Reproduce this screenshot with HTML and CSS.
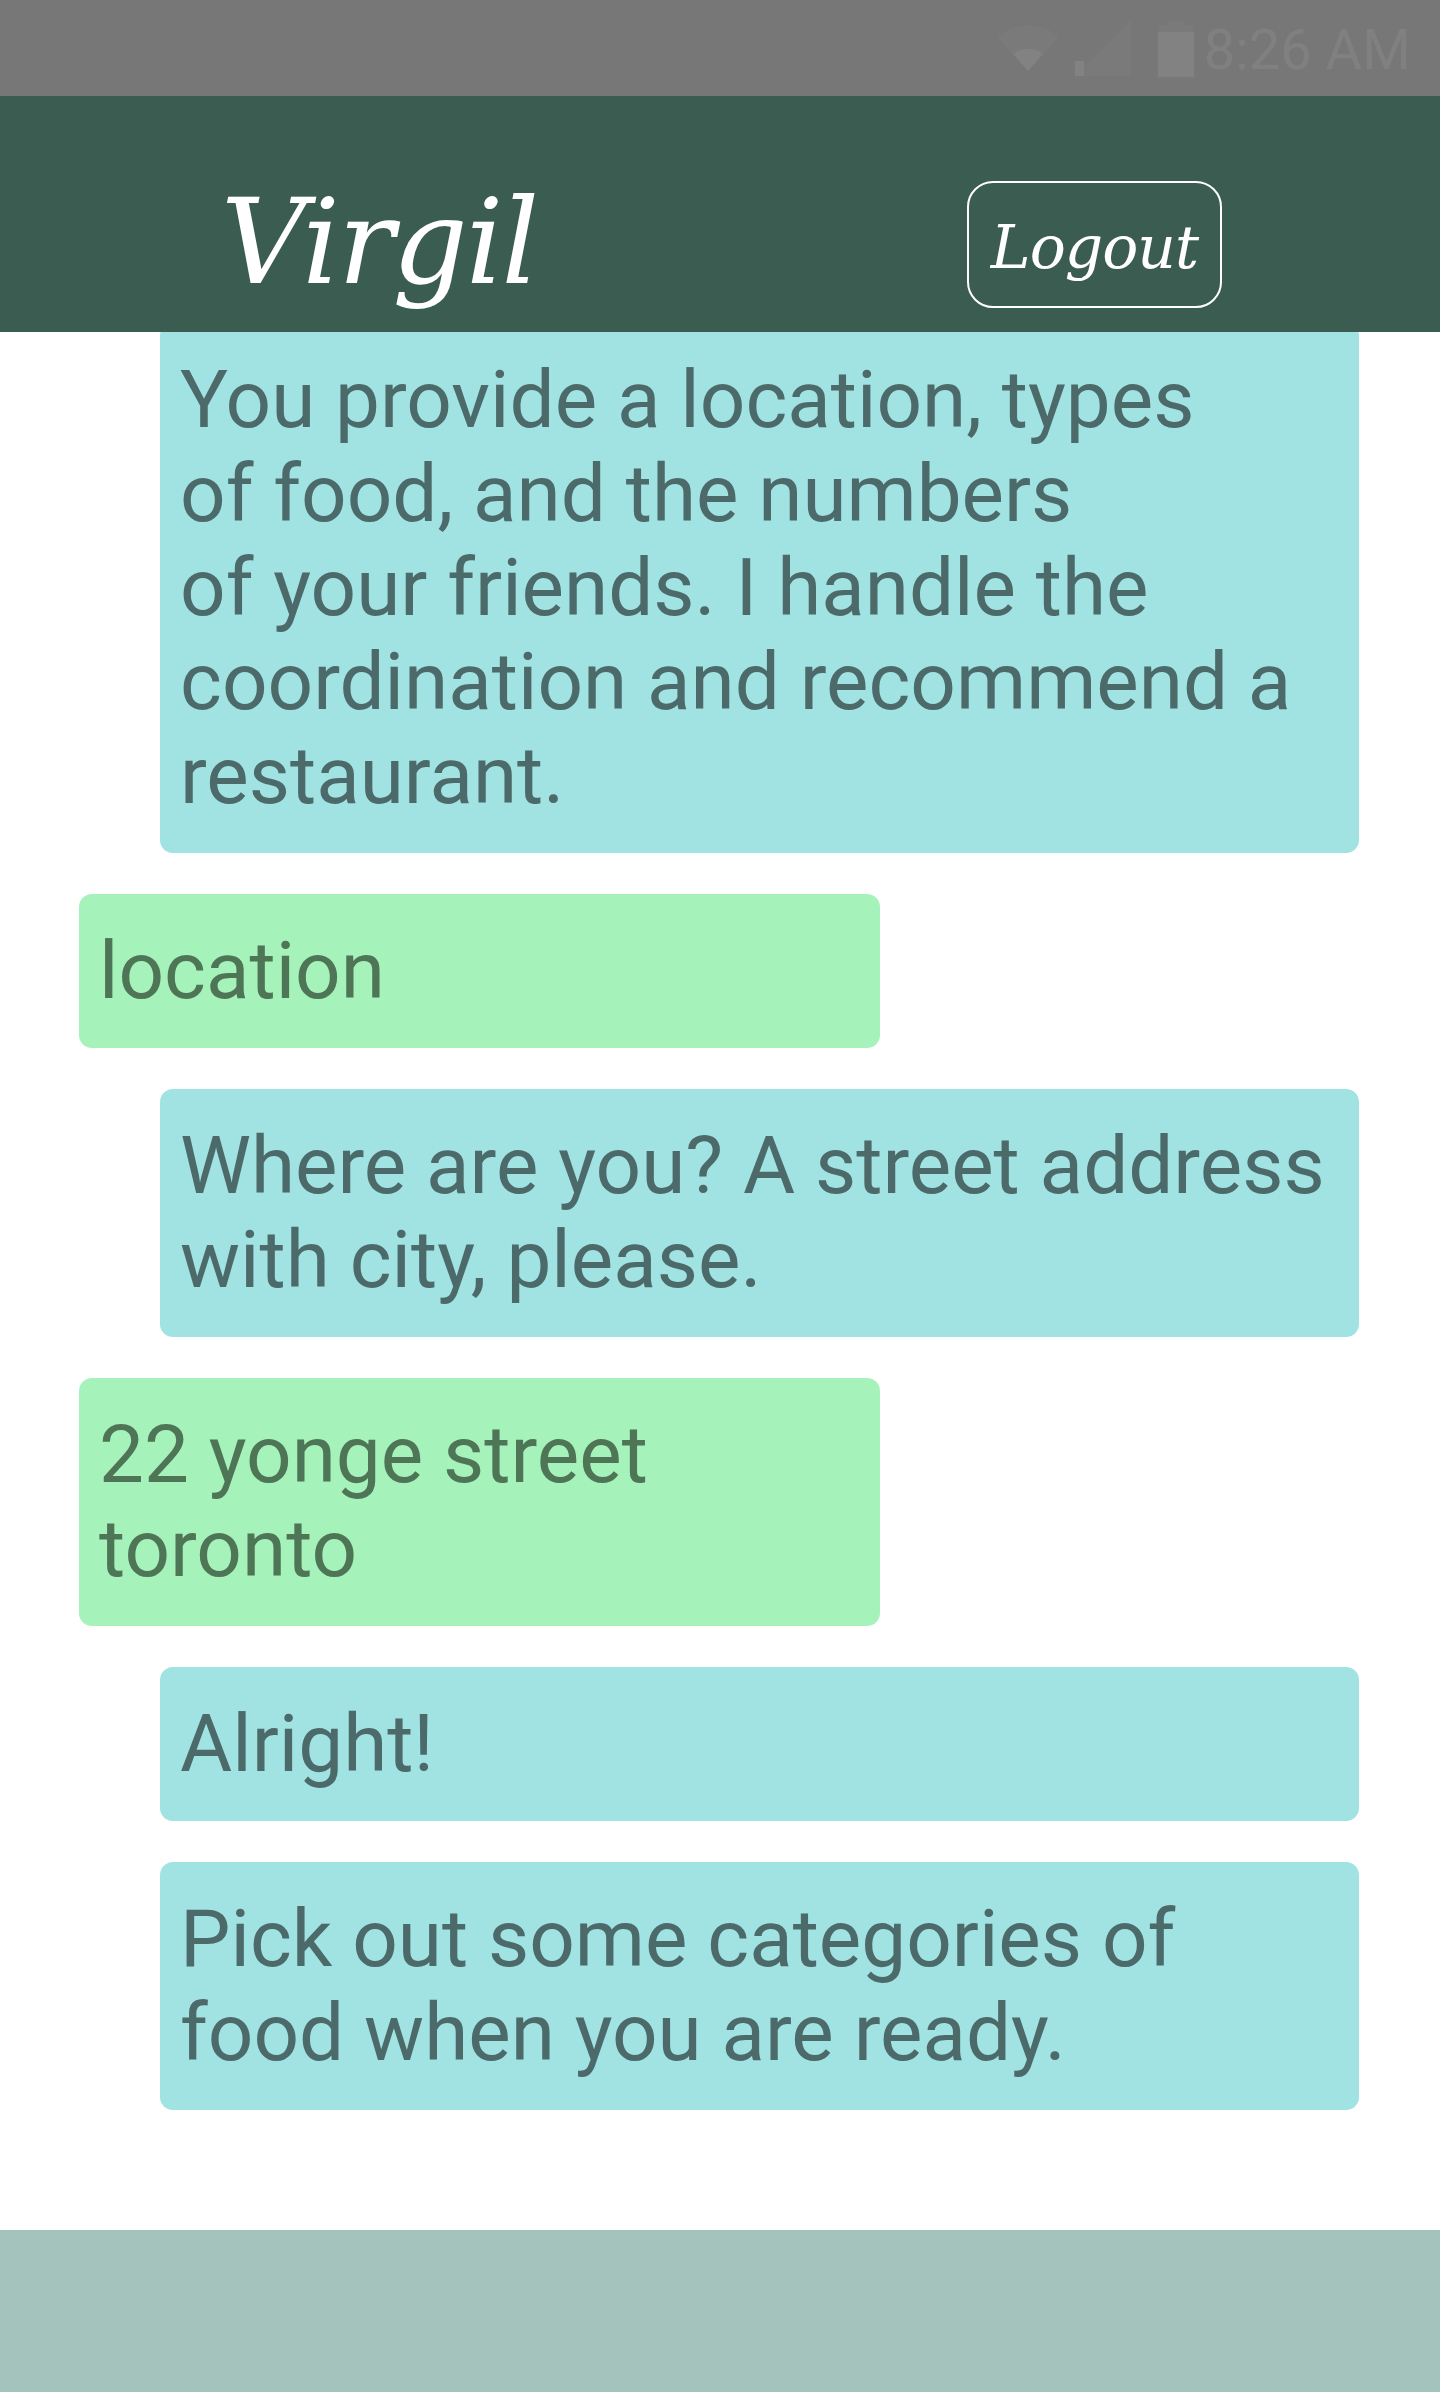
FILE: index.html
```html
<!DOCTYPE html>
<html lang="en">
<head>
<meta charset="utf-8">
<title>Virgil</title>
<link rel="stylesheet" href="styles.css">
</head>
<body>
<div class="statusbar">
  <div class="status-icons">
    <svg class="ic-wifi" width="62" height="48" viewBox="0 0 62 48">
      <path class="dim" d="M31 48 L0 14 A46 46 0 0 1 62 14 Z"/>
      <path class="lit" d="M31 48 L16 31 A24 24 0 0 1 46 31 Z"/>
    </svg>
    <svg class="ic-signal" width="56" height="56" viewBox="0 0 56 56">
      <path class="dim" d="M0 56 L56 56 L56 0 Z"/>
      <rect class="lit" x="0" y="41" width="9" height="15"/>
    </svg>
    <svg class="ic-battery" width="36" height="56" viewBox="0 0 36 56">
      <rect class="dim" x="11" y="0" width="14" height="5"/>
      <rect class="dim" x="0" y="4" width="36" height="52"/>
      <rect class="lit" x="0" y="11" width="36" height="45"/>
    </svg>
    <span class="time">8:26 AM</span>
  </div>
</div>
<header class="appbar">
  <div class="brand">Virgil</div>
  <button class="logout" type="button">Logout</button>
</header>
<main class="chat">
  <div class="chat-list">
    <div class="msg bot first">You provide a location, types<br>of food, and the numbers<br>of your friends. I handle the<br>coordination and recommend a<br>restaurant.</div>
    <div class="msg user">location</div>
    <div class="msg bot">Where are you? A street address<br>with city, please.</div>
    <div class="msg user">22 yonge street<br>toronto</div>
    <div class="msg bot">Alright!</div>
    <div class="msg bot">Pick out some categories of<br>food when you are ready.</div>
  </div>
</main>
<footer class="bottombar"></footer>
</body>
</html>
```
FILE: styles.css
```css
* { box-sizing: border-box; }
html, body { margin: 0; padding: 0; }
body {
  width: 1440px;
  height: 2392px;
  display: flex;
  flex-direction: column;
  background: #ffffff;
  font-family: Roboto, "Noto Sans", sans-serif;
  overflow: hidden;
}

.statusbar {
  height: 96px;
  flex: none;
  background: #777777;
  display: flex;
  justify-content: flex-end;
  align-items: center;
  padding-right: 29px;
}
.status-icons {
  display: flex;
  align-items: center;
  height: 96px;
}
.status-icons .dim { fill: #7a7a7a; }
.status-icons .lit { fill: #828282; }
.ic-wifi { margin-top: -2px; }
.ic-signal { margin-left: 16px; }
.ic-battery { margin-left: 27px; margin-top: 2px; }
.time {
  margin-left: 10px;
  font-family: Roboto, sans-serif;
  font-size: 56px;
  color: #808080;
  line-height: 1;
  margin-top: 4px;
}

.appbar {
  height: 236px;
  flex: none;
  background: #3b5c51;
  display: flex;
  justify-content: space-between;
  align-items: flex-start;
  padding: 0 218px 0 221px;
  position: relative;
  z-index: 1;
}
.brand {
  font-family: "DejaVu Serif", serif;
  font-style: italic;
  font-size: 118px;
  line-height: 1;
  color: #ffffff;
  margin-top: 87px;
  letter-spacing: -2px;
}
.logout {
  margin-top: 85px;
  width: 255px;
  height: 127px;
  border: 2px solid #ffffff;
  border-radius: 26px;
  background: transparent;
  color: #ffffff;
  font-family: "DejaVu Serif", serif;
  font-style: italic;
  font-size: 60px;
  display: flex;
  align-items: center;
  justify-content: center;
  padding: 4px 0 0 0;
  letter-spacing: -1px;
}

.chat {
  flex: 1;
  overflow: hidden;
}
.chat-list {
  display: flex;
  flex-direction: column;
  gap: 41px;
  margin-top: -9px;
}
.msg {
  font-family: Roboto, sans-serif;
  font-size: 80px;
  line-height: 94px;
  padding: 30px 20px;
  border-radius: 13px;
}
.msg.bot {
  margin-left: 160px;
  width: 1199px;
  background: #a1e2e3;
  color: #4d6a6a;
}
.msg.user {
  margin-left: 79px;
  width: 801px;
  background: #a6f2bb;
  color: #4e7555;
}

.bottombar {
  height: 162px;
  flex: none;
  background: #a4c3bd;
}
```
